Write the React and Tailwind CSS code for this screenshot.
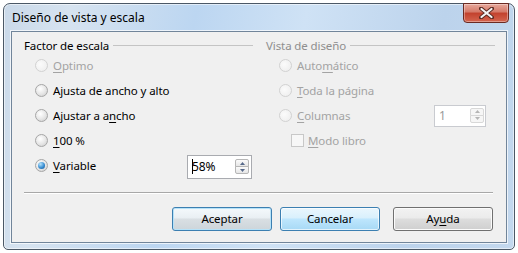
import React from 'react';

const font = "font-['Segoe_UI','Noto_Sans',sans-serif]";

function Radio({ checked, disabled }) {
  return (
    <span
      className={`flex h-[13px] w-[13px] shrink-0 items-center justify-center rounded-full border ${
        disabled
          ? 'border-[#d2d2d2] bg-[radial-gradient(circle_at_40%_40%,#fbfbfb,#ececec)]'
          : 'border-[#a6a6a6] bg-[radial-gradient(circle_at_40%_35%,#ffffff,#e8e8e8_50%,#cacaca)]'
      }`}
    >
      {checked && (
        <span className="h-[7px] w-[7px] rounded-full bg-[radial-gradient(circle_at_35%_30%,#b6e3fb,#3a8fd3_55%,#0f4f8e)]" />
      )}
    </span>
  );
}

function Spin({ disabled }) {
  const b = disabled ? 'border-[#d8d8d8] bg-[#f6f6f6]' : 'border-[#b6b6b6] bg-gradient-to-b from-[#fbfbfb] to-[#e6e6e6]';
  const t = disabled ? '#b5b5b5' : '#56698a';
  return (
    <div className="flex h-[16px] w-[14px] flex-col">
      <div className={`flex h-[8px] items-center justify-center rounded-t-[2px] border ${b}`}>
        <svg width="5" height="3" viewBox="0 0 5 3"><path d="M0 3 L2.5 0 L5 3 Z" fill={t} /></svg>
      </div>
      <div className={`-mt-px flex h-[8px] items-center justify-center rounded-b-[2px] border ${b}`}>
        <svg width="5" height="3" viewBox="0 0 5 3"><path d="M0 0 L2.5 3 L5 0 Z" fill={t} /></svg>
      </div>
    </div>
  );
}

function Row({ children, indent, disabled, checked, right }) {
  return (
    <div className="flex h-[25px] items-center">
      <div className={`flex items-center gap-[5px] ${indent}`}>
        <Radio checked={checked} disabled={disabled} />
        <span className={disabled ? 'text-[#a3a3a3]' : 'text-black'}>{children}</span>
      </div>
      {right}
    </div>
  );
}

function Header({ children, disabled }) {
  return (
    <div className="flex h-[15px] items-center">
      <span className={disabled ? 'text-[#8e8e8e]' : 'text-black'}>{children}</span>
      <div className="ml-[4px] h-px flex-1 bg-[#c4c4c4]" />
    </div>
  );
}

function Button({ children, variant }) {
  const styles = {
    default:
      'border-[#3c7fb1] bg-[linear-gradient(#f4f9fc_0%,#e9eff3_45%,#d9dfe3_50%,#cdd5da_100%)] shadow-[inset_0_0_0_1px_#b6e2f8]',
    hover:
      'border-[#3c7fb1] bg-[linear-gradient(#eaf6fd_0%,#d9f0fc_45%,#bee6fd_50%,#a7d9f5_100%)] shadow-[inset_0_0_0_1px_#ffffffaa]',
    normal:
      'border-[#707070] bg-[linear-gradient(#f2f2f2_0%,#ebebeb_45%,#dddddd_50%,#cfcfcf_100%)] shadow-[inset_0_0_0_1px_#fbfbfb]',
  };
  return (
    <div className={`flex h-[24px] w-[100px] items-center justify-center rounded-[3px] border text-black ${styles[variant]}`}>
      {children}
    </div>
  );
}

export default function App() {
  return (
    <div className={`h-[253px] w-[518px] bg-white pl-[3px] pt-[3px] text-[11.5px] leading-[16px] tracking-[-0.1px] ${font}`}>
      <div className="flex h-[247px] w-[512px] flex-col rounded-t-[7px] rounded-b-[5px] border border-[#4b5866] bg-[linear-gradient(100deg,#cad9e9_0%,#d6e3f0_12%,#bcd6f1_35%,#cfe2f5_55%,#bcd3ec_80%,#c3d8ee_100%)] shadow-[inset_0_0_0_1px_rgba(255,255,255,0.55)]">
        {/* Title bar */}
        <div className="flex h-[27px] items-start">
          <span className="ml-[8px] mt-[6px] text-[12px] tracking-normal text-black">Diseño de vista y escala</span>
          <div className="-mt-px ml-auto mr-[5px] flex h-[20px] w-[46px] items-center justify-center rounded-b-[4px] border border-[#6b2a22] bg-[linear-gradient(#e8a99c_0%,#d47867_45%,#c2412d_50%,#d4654f_100%)] shadow-[inset_0_0_0_1px_rgba(255,255,255,0.35)]">
            <svg width="15" height="12" viewBox="0 0 15 12">
              <path d="M2 1.5 L13 10.5 M13 1.5 L2 10.5" stroke="#5a2a22" strokeWidth="4" strokeLinecap="round" />
              <path d="M2.5 2 L12.5 10 M12.5 2 L2.5 10" stroke="#f4f4f4" strokeWidth="2.2" strokeLinecap="round" />
            </svg>
          </div>
        </div>

        {/* Client area */}
        <div className="mx-[7px] flex h-[212px] flex-col border border-[#71859a] bg-[#f0f0f0] shadow-[0_0_0_1px_rgba(255,255,255,0.7)]">
          <div className="flex h-[147px] gap-[13px] pl-[12px] pt-[6px]">
            {/* Factor de escala */}
            <div className="flex w-[229px] flex-col">
              <Header>Factor de escala</Header>
              <Row indent="ml-[11px]" disabled>
                <u className="underline-offset-2">O</u>ptimo
              </Row>
              <Row indent="ml-[11px]">Ajusta de ancho y alto</Row>
              <Row indent="ml-[11px]">
                Ajustar a a<u className="underline-offset-2">n</u>cho
              </Row>
              <Row indent="ml-[11px]">
                <u className="underline-offset-2">1</u>00 %
              </Row>
              <Row
                indent="ml-[11px]"
                checked
                right={
                  <div className="relative ml-auto mr-[1px] mt-[3px] flex h-[24px] w-[65px] items-center border border-[#a9abb0] bg-white pl-[4px] pr-[2px]">
                    <span className="absolute left-[4px] top-[3px] h-[15px] w-px bg-black" />
                    <span className="text-[12px] text-black">58%</span>
                    <div className="ml-auto">
                      <Spin />
                    </div>
                  </div>
                }
              >
                <u className="underline-offset-2">V</u>ariable
              </Row>
            </div>

            {/* Vista de diseño */}
            <div className="flex w-[229px] flex-col">
              <Header disabled>Vista de diseño</Header>
              <Row indent="ml-[13px]" disabled>
                Auto<u className="underline-offset-2">m</u>ático
              </Row>
              <Row indent="ml-[13px]" disabled>
                <u className="underline-offset-2">T</u>oda la página
              </Row>
              <Row
                indent="ml-[13px]"
                disabled
                right={
                  <div className="ml-auto mr-[9px] flex h-[22px] w-[52px] items-center border border-[#c9cbd0] bg-white pl-[4px] pr-[1px]">
                    <span className="text-[12px] text-[#9a9a9a]">1</span>
                    <div className="ml-auto">
                      <Spin disabled />
                    </div>
                  </div>
                }
              >
                <u className="underline-offset-2">C</u>olumnas
              </Row>
              <div className="flex h-[25px] items-center">
                <div className="ml-[25px] flex items-center gap-[4px]">
                  <span className="h-[13px] w-[13px] border border-[#c8c8c8] bg-[#f7f7f7]" />
                  <span className="text-[#a3a3a3]">
                    <u className="underline-offset-2">M</u>odo libro
                  </span>
                </div>
              </div>
            </div>
          </div>

          <div className="ml-[12px] mr-[13px] mt-[13px] h-px bg-[#a8a8a8] shadow-[0_1px_0_#ffffff]" />

          <div className="mr-[13px] mt-[14px] flex justify-end">
            <div className="flex gap-[8px]">
              <Button variant="default">Aceptar</Button>
              <Button variant="hover">Cancelar</Button>
            </div>
            <div className="ml-[13px]">
              <Button variant="normal">
                Ay<u className="underline-offset-2">u</u>da
              </Button>
            </div>
          </div>
        </div>
      </div>
    </div>
  );
}
